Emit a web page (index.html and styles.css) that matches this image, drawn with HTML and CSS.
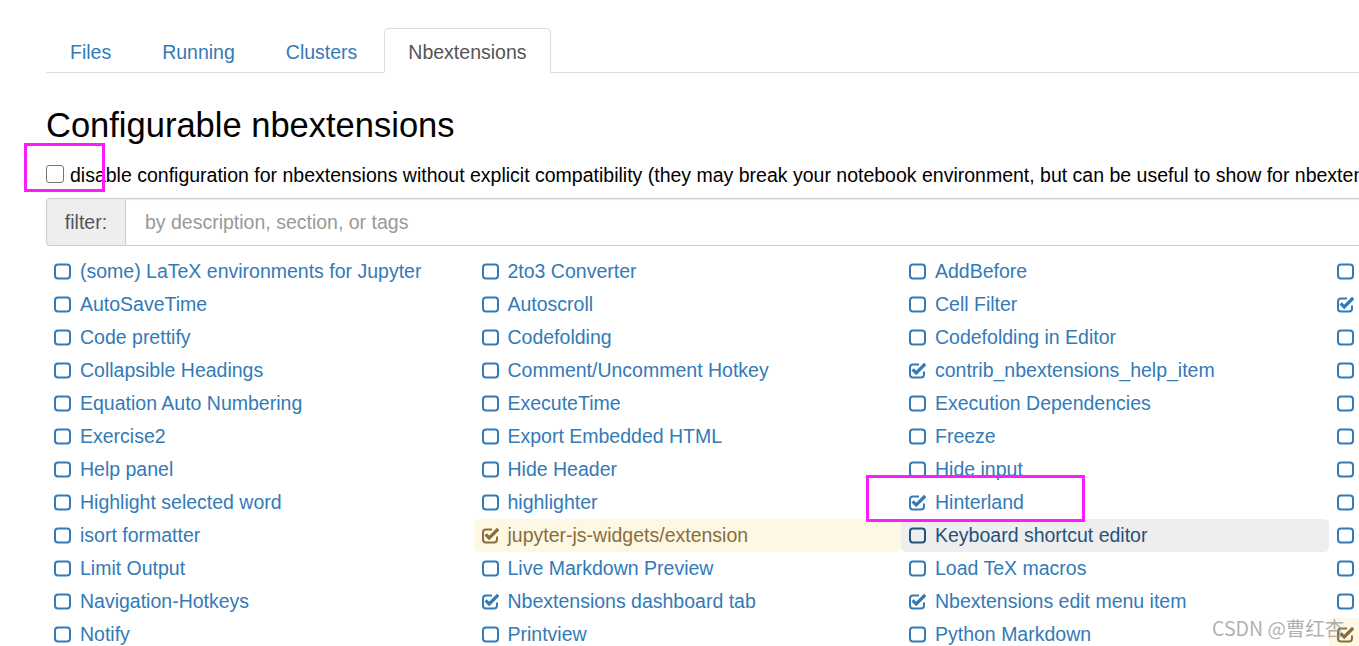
FILE: index.html
```html
<!DOCTYPE html>
<html lang="en">
<head>
<meta charset="utf-8">
<title>Nbextensions</title>
<link rel="stylesheet" href="styles.css">
</head>
<body>
<svg class="defs" width="0" height="0" aria-hidden="true">
  <symbol id="sq" viewBox="0 0 17 17">
    <rect x="1" y="1.5" width="15" height="14" rx="3" ry="3" fill="none" stroke="currentColor" stroke-width="2"/>
  </symbol>
  <symbol id="ck" viewBox="0 0 17 17">
    <path d="M10 2.5 H4 Q1 2.5 1 5.5 V12.5 Q1 15.5 4 15.5 H12 Q15 15.5 15 12.5 V9.5" fill="none" stroke="currentColor" stroke-width="2"/>
    <path d="M3.6 7.4 L7.2 11 L16.2 2" fill="none" stroke="currentColor" stroke-width="3.2"/>
  </symbol>
</svg>
<div class="page">
  <ul class="tabs">
    <li class="tab"><a>Files</a></li>
    <li class="tab"><a>Running</a></li>
    <li class="tab"><a>Clusters</a></li>
    <li class="tab active"><a>Nbextensions</a></li>
  </ul>

  <h3 class="title">Configurable nbextensions</h3>

  <div class="compat">
    <span class="native-box"></span>disable configuration for nbextensions without explicit compatibility (they may break your notebook environment, but can be useful to show for nbextension development)
  </div>

  <div class="filter">
    <span class="filter-label">filter:</span>
    <span class="filter-input">by description, section, or tags</span>
  </div>

  <ul class="list">
    <li class="item"><svg class="ico"><use href="#sq"/></svg>(some) LaTeX environments for Jupyter</li>
    <li class="item"><svg class="ico"><use href="#sq"/></svg>2to3 Converter</li>
    <li class="item"><svg class="ico"><use href="#sq"/></svg>AddBefore</li>
    <li class="item"><svg class="ico"><use href="#sq"/></svg>Autopep8</li>

    <li class="item"><svg class="ico"><use href="#sq"/></svg>AutoSaveTime</li>
    <li class="item"><svg class="ico"><use href="#sq"/></svg>Autoscroll</li>
    <li class="item"><svg class="ico"><use href="#sq"/></svg>Cell Filter</li>
    <li class="item"><svg class="ico"><use href="#ck"/></svg>Code Font Size</li>

    <li class="item"><svg class="ico"><use href="#sq"/></svg>Code prettify</li>
    <li class="item"><svg class="ico"><use href="#sq"/></svg>Codefolding</li>
    <li class="item"><svg class="ico"><use href="#sq"/></svg>Codefolding in Editor</li>
    <li class="item"><svg class="ico"><use href="#sq"/></svg>CodeMirror mode extensions</li>

    <li class="item"><svg class="ico"><use href="#sq"/></svg>Collapsible Headings</li>
    <li class="item"><svg class="ico"><use href="#sq"/></svg>Comment/Uncomment Hotkey</li>
    <li class="item"><svg class="ico"><use href="#ck"/></svg>contrib_nbextensions_help_item</li>
    <li class="item"><svg class="ico"><use href="#sq"/></svg>datestamper</li>

    <li class="item"><svg class="ico"><use href="#sq"/></svg>Equation Auto Numbering</li>
    <li class="item"><svg class="ico"><use href="#sq"/></svg>ExecuteTime</li>
    <li class="item"><svg class="ico"><use href="#sq"/></svg>Execution Dependencies</li>
    <li class="item"><svg class="ico"><use href="#sq"/></svg>Exercise</li>

    <li class="item"><svg class="ico"><use href="#sq"/></svg>Exercise2</li>
    <li class="item"><svg class="ico"><use href="#sq"/></svg>Export Embedded HTML</li>
    <li class="item"><svg class="ico"><use href="#sq"/></svg>Freeze</li>
    <li class="item"><svg class="ico"><use href="#sq"/></svg>Gist-it</li>

    <li class="item"><svg class="ico"><use href="#sq"/></svg>Help panel</li>
    <li class="item"><svg class="ico"><use href="#sq"/></svg>Hide Header</li>
    <li class="item"><svg class="ico"><use href="#sq"/></svg>Hide input</li>
    <li class="item"><svg class="ico"><use href="#sq"/></svg>Hide input all</li>

    <li class="item"><svg class="ico"><use href="#sq"/></svg>Highlight selected word</li>
    <li class="item"><svg class="ico"><use href="#sq"/></svg>highlighter</li>
    <li class="item"><svg class="ico"><use href="#ck"/></svg>Hinterland</li>
    <li class="item"><svg class="ico"><use href="#sq"/></svg>Initialization cells</li>

    <li class="item"><svg class="ico"><use href="#sq"/></svg>isort formatter</li>
    <li class="item warn"><svg class="ico"><use href="#ck"/></svg>jupyter-js-widgets/extension</li>
    <li class="item hover"><svg class="ico"><use href="#sq"/></svg>Keyboard shortcut editor</li>
    <li class="item"><svg class="ico"><use href="#sq"/></svg>Launch QTConsole</li>

    <li class="item"><svg class="ico"><use href="#sq"/></svg>Limit Output</li>
    <li class="item"><svg class="ico"><use href="#sq"/></svg>Live Markdown Preview</li>
    <li class="item"><svg class="ico"><use href="#sq"/></svg>Load TeX macros</li>
    <li class="item"><svg class="ico"><use href="#sq"/></svg>Move selected cells</li>

    <li class="item"><svg class="ico"><use href="#sq"/></svg>Navigation-Hotkeys</li>
    <li class="item"><svg class="ico"><use href="#ck"/></svg>Nbextensions dashboard tab</li>
    <li class="item"><svg class="ico"><use href="#ck"/></svg>Nbextensions edit menu item</li>
    <li class="item"><svg class="ico"><use href="#sq"/></svg>nbTranslate</li>

    <li class="item"><svg class="ico"><use href="#sq"/></svg>Notify</li>
    <li class="item"><svg class="ico"><use href="#sq"/></svg>Printview</li>
    <li class="item"><svg class="ico"><use href="#sq"/></svg>Python Markdown</li>
    <li class="item warn"><svg class="ico"><use href="#ck"/></svg>Rubberband</li>
  </ul>
</div>

<div class="mark mark-a"></div>
<div class="mark mark-b"></div>
<div class="watermark">CSDN @曹红杏</div>
</body>
</html>
```

FILE: styles.css
```css
html, body {
  margin: 0;
  padding: 0;
  overflow: hidden;
  background: #fff;
}
body {
  font-family: "Liberation Sans", Arial, sans-serif;
  font-size: 19.5px;
  color: #333;
  width: 1359px;
  height: 646px;
  position: relative;
}
.defs {
  position: absolute;
  width: 0;
  height: 0;
}
.page {
  width: 1800px;
  padding: 28px 0 0 46px;
  white-space: nowrap;
}

/* tabs */
.tabs {
  list-style: none;
  margin: 0;
  padding: 0;
  display: flex;
  border-bottom: 1px solid #ddd;
  height: 44px;
}
.tab {
  margin-right: 3px;
  margin-bottom: -1px;
}
.tab a {
  display: block;
  box-sizing: border-box;
  height: 45px;
  padding: 0 23px;
  line-height: 46px;
  color: #337ab7;
  border: 1px solid transparent;
  border-radius: 5px 5px 0 0;
}
.tab.active a {
  color: #555;
  background: #fff;
  border-color: #ddd;
  border-bottom-color: #fff;
}

/* heading */
.title {
  margin: 33px 0 0;
  font-weight: 400;
  font-size: 34.5px;
  line-height: 38px;
  color: #000;
}

/* compat checkbox */
.compat {
  margin-top: 17px;
  line-height: 28px;
  color: #000;
}
.native-box {
  display: inline-block;
  box-sizing: border-box;
  width: 18px;
  height: 18px;
  border: 1px solid #767676;
  border-radius: 3px;
  margin-right: 6px;
  vertical-align: -1px;
}

/* filter */
.filter {
  margin-top: 9px;
  display: flex;
  height: 48px;
  box-sizing: border-box;
}
.filter-label {
  box-sizing: border-box;
  width: 80px;
  background: #eee;
  border: 1px solid #ccc;
  border-radius: 4px 0 0 4px;
  color: #555;
  display: flex;
  align-items: center;
  justify-content: center;
}
.filter-input {
  flex: 1;
  border: 1px solid #ccc;
  border-left: 0;
  padding-left: 19px;
  color: #999;
  display: flex;
  align-items: center;
  box-shadow: inset 0 1px 1px rgba(0,0,0,.075);
}

/* extension list */
.list {
  list-style: none;
  margin: 9px 0 0;
  padding: 0;
  display: grid;
  grid-template-columns: repeat(4, 427.5px);
  grid-auto-rows: 33px;
}
.item {
  display: flex;
  align-items: center;
  padding-left: 8px;
  color: #337ab7;
  border-radius: 5px;
}
.item.warn {
  background: #fcf8e3;
  color: #8a6d3b;
}
.item.hover {
  background: #eee;
  color: #23527c;
}
.ico {
  width: 17px;
  height: 17px;
  margin-right: 9px;
  flex: none;
  color: inherit;
}

/* annotations */
.mark {
  position: absolute;
  border: 3px solid #ff1aff;
  box-sizing: border-box;
}
.mark-a {
  left: 24px;
  top: 143px;
  width: 81px;
  height: 49px;
}
.mark-b {
  left: 866px;
  top: 475px;
  width: 219px;
  height: 47px;
}
.watermark {
  position: absolute;
  left: 1212px;
  top: 616px;
  font-family: "Noto Sans CJK SC", "Liberation Sans", sans-serif;
  font-size: 19.5px;
  color: rgba(150,150,150,0.75);
  line-height: 24px;
}
```
